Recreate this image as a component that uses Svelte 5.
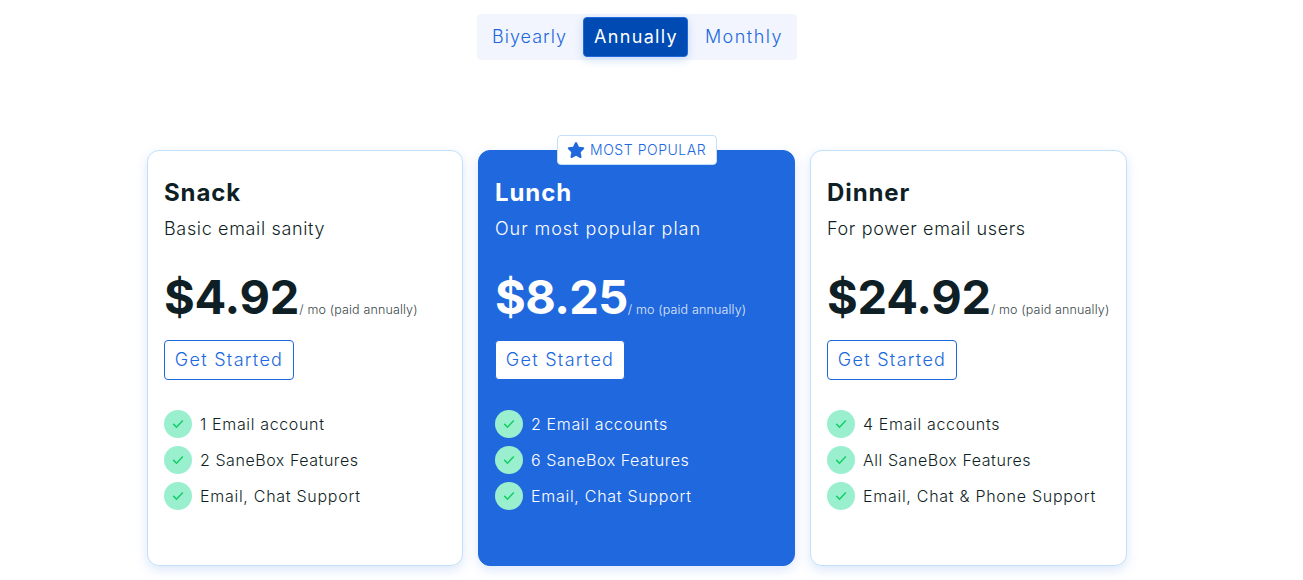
<script>
    let period = $state("Annually");

    const periods = ["Biyearly", "Annually", "Monthly"];

    const plans = [
        {
            name: "Snack",
            tagline: "Basic email sanity",
            price: "$4.92",
            features: ["1 Email account", "2 SaneBox Features", "Email, Chat Support"]
        },
        {
            name: "Lunch",
            tagline: "Our most popular plan",
            price: "$8.25",
            popular: true,
            features: ["2 Email accounts", "6 SaneBox Features", "Email, Chat Support"]
        },
        {
            name: "Dinner",
            tagline: "For power email users",
            price: "$24.92",
            features: ["4 Email accounts", "All SaneBox Features", "Email, Chat & Phone Support"]
        }
    ];
</script>

<main>
    <div class="periods">
        {#each periods as item}
            <button class="period" class:active={period === item} onclick={() => period = item}>{item}</button>
        {/each}
    </div>

    <section class="plans">
        {#each plans as plan}
            <article class="plan" class:popular={plan.popular}>
                {#if plan.popular}
                    <div class="badge">
                        <svg width="18" height="16" viewBox="0 0 576 512" fill="currentColor">
                            <path d="M316.9 18C311.600 7 300.400 0 288.100 0s-23.400 7-28.800 18L195 150.300 51.400 171.500c-12 1.800-22 10.200-25.700 21.700s-.7 24.200 7.900 32.700L137.800 329 113.200 474.700c-2 12 3 24.200 12.900 31.300s23 8 33.800 2.300l128.300-68.500 128.300 68.500c10.800 5.700 23.900 4.900 33.800-2.300s14.900-19.300 12.900-31.300L438.500 329 542.700 225.900c8.600-8.500 11.700-21.200 7.900-32.700s-13.700-19.900-25.700-21.700L381.200 150.300 316.900 18z" />
                        </svg>
                        <span>MOST POPULAR</span>
                    </div>
                {/if}
                <h2>{plan.name}</h2>
                <p class="tagline">{plan.tagline}</p>
                <div class="price">
                    <strong>{plan.price}</strong><small>/ mo (paid annually)</small>
                </div>
                <button class="start">Get Started</button>
                <ul>
                    {#each plan.features as feature}
                        <li>
                            <i class="check">
                                <svg width="12" height="10" viewBox="0 0 12 10" fill="none">
                                    <path d="M1.200 4.900 4.500 8.200 10.800 1.400" stroke="#13ce66" stroke-width="1.500" />
                                </svg>
                            </i>
                            <span>{feature}</span>
                        </li>
                    {/each}
                </ul>
            </article>
        {/each}
    </section>
</main>

<style>
    :global(body) {
        margin: 0;
        background: #fff;
    }

    main {
        box-sizing: border-box;
        width: 1274px;
        height: 580px;
        padding-top: 14px;
        overflow: hidden;
        color: #0f1f26;
        font-family: Inter, "Open Sans", sans-serif;
        font-weight: 350;
    }

    button {
        box-sizing: border-box;
        border: 1px solid transparent;
        border-radius: 4px;
        background: none;
        color: #2068de;
        cursor: pointer;
        font-family: inherit;
        font-size: 18px;
        font-weight: 300;
        height: 40px;
        line-height: 38px;
        padding: 0;
        white-space: nowrap;
    }

    .periods {
        box-sizing: border-box;
        display: flex;
        gap: 5px;
        width: 320px;
        height: 46px;
        margin: 0 auto;
        padding: 3px;
        border-radius: 4px;
        background: #f2f5fd;
    }

    .period {
        flex: 0 0 98px;
        padding-left: 1px;
        letter-spacing: 1px;
    }

    .period:last-child {
        flex-basis: 101px;
        letter-spacing: 1.5px;
    }

    .period.active {
        flex-basis: 105px;
        background: #004ab3;
        border-color: #1f68de;
        box-shadow: 0 3px 10px rgba(32, 104, 222, 0.2);
        color: #fff;
        font-weight: 400;
        letter-spacing: 1.3px;
    }

    .plans {
        display: grid;
        grid-template-columns: 316px 317px 317px;
        gap: 15px;
        width: 980px;
        margin: 90px auto 0;
    }

    .plan {
        box-sizing: border-box;
        height: 416px;
        padding: 27px 16px 0;
        border: 1px solid #c3e0fb;
        border-radius: 12px;
        background: #fff;
        box-shadow: 0 4px 12px rgba(32, 104, 222, 0.16);
        position: relative;
    }

    .popular {
        background: #2068de;
        border-color: #2068de;
        color: #fff;
    }

    .badge {
        box-sizing: border-box;
        display: flex;
        align-items: center;
        gap: 5px;
        width: 160px;
        height: 30px;
        padding-left: 9px;
        border: 1px solid #c3e0fb;
        border-radius: 4px;
        background: #fff;
        color: #2068de;
        font-size: 14px;
        font-weight: 300;
        line-height: 16px;
        letter-spacing: 0.55px;
        white-space: nowrap;
        position: absolute;
        top: -16px;
        left: calc(50% - 79.5px);
    }

    h2 {
        margin: 0;
        font-size: 24px;
        font-weight: 750;
        line-height: 29px;
        letter-spacing: 0.9px;
    }

    .tagline {
        margin: 9px 0 0;
        font-size: 18px;
        line-height: 26px;
        letter-spacing: 0.65px;
    }

    .popular .tagline {
        letter-spacing: 0.95px;
    }

    .price {
        display: flex;
        align-items: baseline;
        height: 60px;
        margin-top: 25px;
        line-height: 60px;
        white-space: nowrap;
    }

    .price strong {
        font-size: 47px;
        font-weight: 750;
        letter-spacing: -0.2px;
    }

    .popular strong {
        letter-spacing: -0.6px;
    }

    .price small {
        font-size: 12.5px;
        font-weight: 300;
        letter-spacing: 0.15px;
        opacity: 0.85;
    }

    .start {
        display: block;
        width: 130px;
        margin-top: 13px;
        border-color: #2068de;
        letter-spacing: 1.3px;
    }

    .popular .start {
        background: #fff;
    }

    ul {
        display: grid;
        gap: 8px;
        margin: 30px 0 0;
        padding: 0;
        list-style: none;
    }

    li {
        display: flex;
        align-items: center;
        gap: 8px;
        height: 28px;
        font-size: 16px;
        letter-spacing: 0.65px;
        white-space: nowrap;
    }

    li:nth-child(2) {
        letter-spacing: 0.55px;
    }

    li:last-child {
        letter-spacing: 0.72px;
    }

    .check {
        display: flex;
        align-items: center;
        justify-content: center;
        width: 28px;
        height: 28px;
        border-radius: 50%;
        background: #9af0ce;
    }
</style>
